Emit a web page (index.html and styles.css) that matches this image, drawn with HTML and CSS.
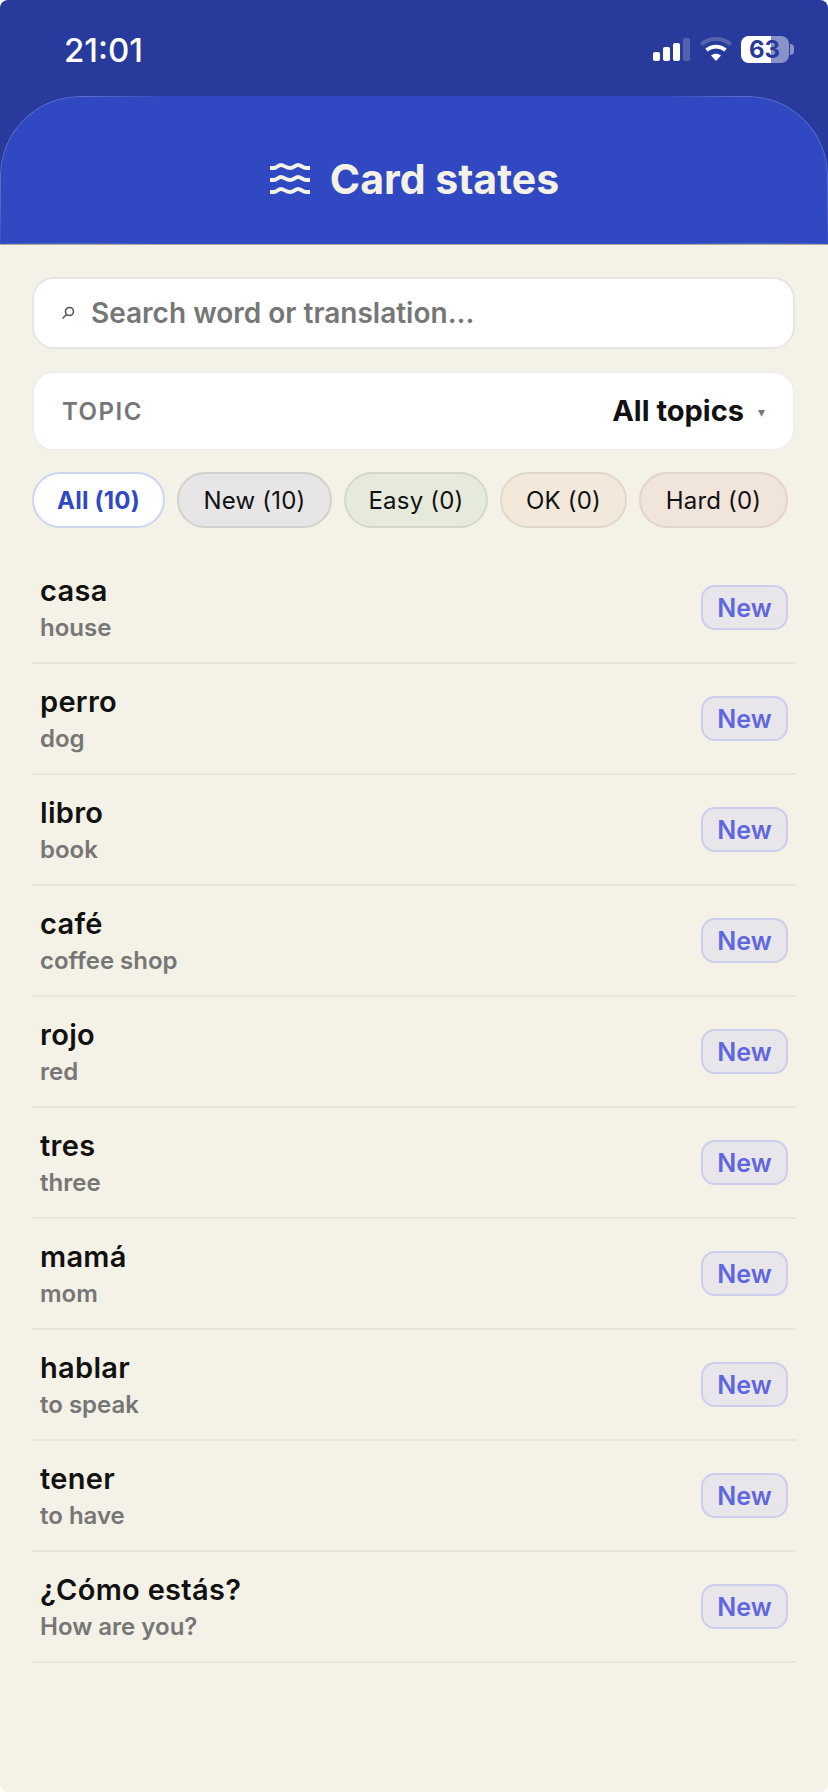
FILE: index.html
```html
<!DOCTYPE html>
<html lang="en">
<head>
  <meta charset="UTF-8" />
  <meta name="viewport" content="width=device-width, initial-scale=1.0"/>
  <title>Card states</title>
  <link rel="stylesheet" href="styles.css">
</head>
<body>
  <div class="screen">
    <div class="top">
      <div class="status-bar">
        <span class="time">21:01</span>
        <div class="status-icons">
          <svg class="signal" width="37" height="23" viewBox="0 0 37 23">
            <rect x="0" y="14" width="7" height="9" rx="2" fill="#fff"/>
            <rect x="10" y="9" width="7" height="14" rx="2" fill="#fff"/>
            <rect x="20" y="5" width="7" height="18" rx="2" fill="#fff"/>
            <rect x="30" y="0" width="7" height="23" rx="2" fill="#fff" fill-opacity="0.2"/>
          </svg>
          <svg class="wifi" width="32" height="24" viewBox="0 0 32 24">
            <path d="M1 7.500C9.500 0 22.500 0 31 7.500" fill="none" stroke="#fff" stroke-opacity="0.2" stroke-width="4"/>
            <path d="M6.500 13C12 8.500 20 8.500 25.500 13" fill="none" stroke="#fff" stroke-width="3.600"/>
            <path d="M11 18.500C14 16 18 16 21 18.500L16 24Z" fill="#fff"/>
          </svg>
          <div class="battery">
            <div class="battery-fill"></div>
            <span class="battery-num">63</span>
            <span class="battery-nub"></span>
          </div>
        </div>
      </div>
      <header class="app-header">
        <svg class="waves" width="40" height="32" viewBox="0 0 40 32">
          <path d="M0 5H4C7 5 8 2 11 2S16 5 20 5 25 2 28 2 33 5 36 5H40" fill="none" stroke="#f4f1e6" stroke-width="3.800"/>
          <path d="M0 17H4C7 17 8 14 11 14S16 17 20 17 25 14 28 14 33 17 36 17H40" fill="none" stroke="#f4f1e6" stroke-width="3.800"/>
          <path d="M0 29H4C7 29 8 26 11 26S16 29 20 29 25 26 28 26 33 29 36 29H40" fill="none" stroke="#f4f1e6" stroke-width="3.800"/>
        </svg>
        <h1>Card states</h1>
      </header>
    </div>

    <main class="content">
      <div class="search-box">
        <svg class="search-icon" width="14" height="14" viewBox="0 0 14 14">
          <circle cx="8.500" cy="5.500" r="4" fill="none" stroke="#555" stroke-width="1.600"/>
          <path d="M5.500 8.500L1.500 12.500" stroke="#555" stroke-width="1.600"/>
        </svg>
        <span class="search-text">Search word or translation...</span>
      </div>

      <div class="topic-box">
        <span class="topic-label">TOPIC</span>
        <span class="topic-value">All topics</span>
        <span class="topic-arrow">▾</span>
      </div>

      <div class="chips">
        <span class="chip chip-all">All (10)</span>
        <span class="chip chip-new">New (10)</span>
        <span class="chip chip-easy">Easy (0)</span>
        <span class="chip chip-ok">OK (0)</span>
        <span class="chip chip-hard">Hard (0)</span>
      </div>

      <ul class="word-list">
        <li class="word-row"><div class="word-text"><div class="word">casa</div><div class="meaning">house</div></div><span class="badge">New</span></li>
        <li class="word-row"><div class="word-text"><div class="word">perro</div><div class="meaning">dog</div></div><span class="badge">New</span></li>
        <li class="word-row"><div class="word-text"><div class="word">libro</div><div class="meaning">book</div></div><span class="badge">New</span></li>
        <li class="word-row"><div class="word-text"><div class="word">café</div><div class="meaning">coffee shop</div></div><span class="badge">New</span></li>
        <li class="word-row"><div class="word-text"><div class="word">rojo</div><div class="meaning">red</div></div><span class="badge">New</span></li>
        <li class="word-row"><div class="word-text"><div class="word">tres</div><div class="meaning">three</div></div><span class="badge">New</span></li>
        <li class="word-row"><div class="word-text"><div class="word">mamá</div><div class="meaning">mom</div></div><span class="badge">New</span></li>
        <li class="word-row"><div class="word-text"><div class="word">hablar</div><div class="meaning">to speak</div></div><span class="badge">New</span></li>
        <li class="word-row"><div class="word-text"><div class="word">tener</div><div class="meaning">to have</div></div><span class="badge">New</span></li>
        <li class="word-row"><div class="word-text"><div class="word">¿Cómo estás?</div><div class="meaning">How are you?</div></div><span class="badge">New</span></li>
      </ul>
    </main>
  </div>
</body>
</html>
```

FILE: styles.css
```css
html, body {
  margin: 0;
  padding: 0;
  background: #fff;
}

.screen {
  width: 828px;
  height: 1792px;
  overflow: hidden;
  border-radius: 8px;
  background: #f4f1e6;
  font-family: 'Inter', sans-serif;
  color: #111;
}

.top {
  background: #283a9b;
}

.status-bar {
  height: 96px;
  box-sizing: border-box;
  display: flex;
  justify-content: space-between;
  padding: 32px 39px 0 64px;
}

.time {
  font-size: 33px;
  line-height: 36px;
  font-weight: 500;
  color: #fff;
}

.status-icons {
  display: flex;
  align-items: flex-start;
  gap: 10px;
  padding-top: 4px;
}

.signal {
  margin-top: 2px;
}

.wifi {
  margin-top: 1px;
  margin-right: -1px;
}

.battery {
  position: relative;
  width: 48px;
  height: 27px;
  border-radius: 8px;
  background: rgba(255, 255, 255, 0.45);
}

.battery-fill {
  width: 30px;
  height: 27px;
  border-radius: 8px 0 0 8px;
  background: #fff;
}

.battery-num {
  position: absolute;
  left: 8px;
  top: 0;
  font-size: 24px;
  line-height: 27px;
  font-weight: 700;
  color: #283a9b;
}

.battery-nub {
  position: absolute;
  right: -5px;
  top: 8px;
  width: 4px;
  height: 11px;
  border-radius: 0 4px 4px 0;
  background: rgba(255, 255, 255, 0.45);
}

.app-header {
  position: relative;
  height: 149px;
  box-sizing: border-box;
  display: flex;
  align-items: center;
  justify-content: center;
  gap: 20px;
  padding-top: 17px;
  padding-left: 1px;
  background: #3049c2;
  border-radius: 80px 80px 0 0;
  border-bottom: 1px solid #a9a9a0;
}

/* thin light edge, only visible around the two corners */
.app-header::before {
  content: "";
  position: absolute;
  inset: 0;
  border: 1px solid #6474c8;
  border-radius: 80px 80px 0 0;
  -webkit-mask-image: radial-gradient(circle 115px at 70px 70px, #000 55%, transparent), radial-gradient(circle 115px at calc(100% - 70px) 70px, #000 55%, transparent);
  mask-image: radial-gradient(circle 115px at 70px 70px, #000 55%, transparent), radial-gradient(circle 115px at calc(100% - 70px) 70px, #000 55%, transparent);
}

.app-header h1 {
  margin: 0;
  font-size: 41px;
  font-weight: 700;
  color: #f4f1e6;
}

.content {
  padding: 32px 32px 0;
}

.search-box {
  height: 72px;
  box-sizing: border-box;
  display: flex;
  align-items: center;
  gap: 16px;
  padding-left: 27px;
  background: #fff;
  border: 2px solid #e6e6e4;
  border-radius: 22px;
  margin-right: 1px;
}

.search-text {
  font-size: 28px;
  font-weight: 600;
  color: #767676;
}

.topic-box {
  height: 80px;
  box-sizing: border-box;
  display: flex;
  align-items: center;
  margin-top: 22px;
  margin-right: 1px;
  padding: 0 28px 0 28px;
  background: #fff;
  border: 2px solid #eeeeec;
  border-radius: 22px;
}

.topic-label {
  flex: 1;
  font-size: 24px;
  font-weight: 600;
  letter-spacing: 1.500px;
  color: #767676;
}

.topic-value {
  margin-top: -2px;
  font-size: 29px;
  font-weight: 700;
  color: #111;
}

.topic-arrow {
  margin-left: 14px;
  font-size: 14px;
  color: #777;
}

.chips {
  display: flex;
  gap: 12px;
  margin-top: 21px;
}

.chip {
  height: 56px;
  box-sizing: border-box;
  display: flex;
  align-items: center;
  justify-content: center;
  font-size: 24px;
  letter-spacing: 0.200px;
  border-radius: 28px;
  border: 2px solid;
  color: #111;
}

.chip-all {
  width: 133px;
  background: #fff;
  border-color: #ccd4f2;
  color: #3049c2;
  font-weight: 700;
}

.chip-new {
  width: 155px;
  background: #e7e5e6;
  border-color: #d3d1d0;
}

.chip-easy {
  width: 144px;
  background: #e6eadb;
  border-color: #d4d8ca;
}

.chip-ok {
  width: 127px;
  background: #f2e9da;
  border-color: #e0d8ca;
}

.chip-hard {
  width: 149px;
  background: #f1e4db;
  border-color: #e0d4cb;
}

.word-list {
  list-style: none;
  margin: 25px 0 0;
  padding: 0;
}

.word-row {
  height: 111px;
  box-sizing: border-box;
  display: flex;
  align-items: center;
  justify-content: space-between;
  padding: 0 8px;
  border-bottom: 2px solid #e8e6da;
}

.word-text {
  padding-top: 2px;
}

.word {
  font-size: 29px;
  line-height: 34px;
  font-weight: 600;
  letter-spacing: 0.300px;
  color: #111;
}

.meaning {
  margin-top: 5px;
  font-size: 24px;
  line-height: 30px;
  font-weight: 600;
  color: #767676;
}

.badge {
  width: 87px;
  height: 45px;
  box-sizing: border-box;
  display: flex;
  align-items: center;
  justify-content: center;
  font-size: 25px;
  font-weight: 600;
  color: #5f67e0;
  background: #e8e6ea;
  border: 2px solid #cdcdec;
  border-radius: 14px;
}
```
